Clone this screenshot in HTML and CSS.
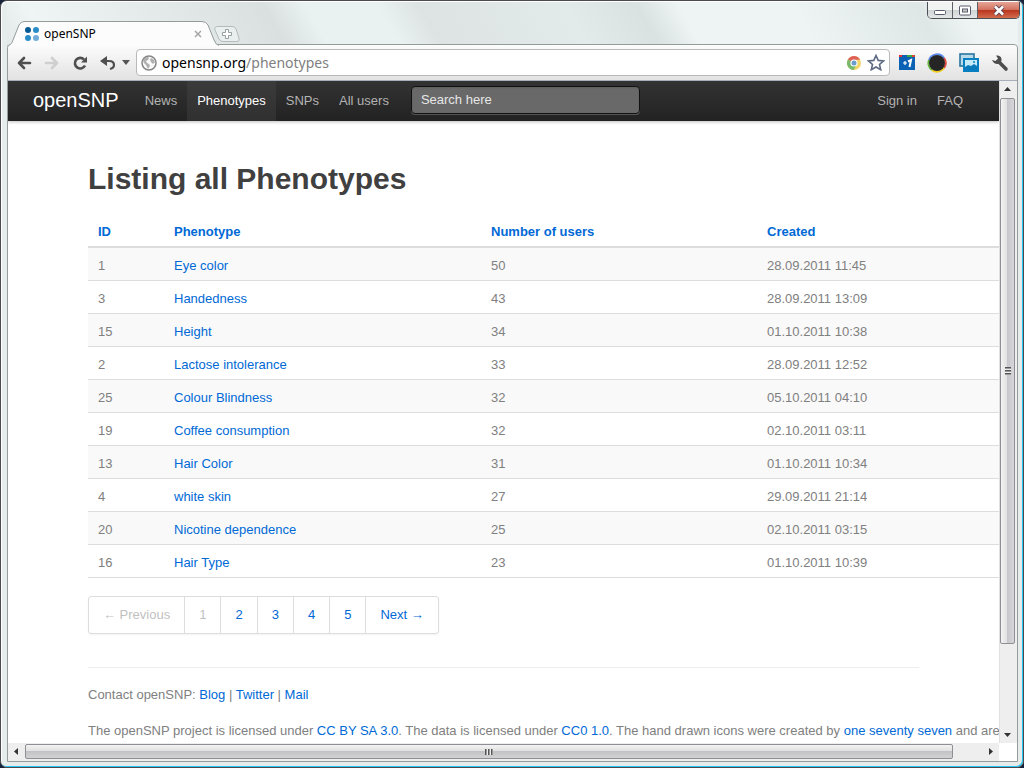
FILE: index.html
```
<!DOCTYPE html>
<html lang="en">
<head>
  <meta charset="UTF-8" />
  <title>openSNP</title>
  <link rel="stylesheet" href="styles.css">
</head>
<body>

  <div class="window">
    <header class="titlebar">
      <div class="tab">
        <svg class="tab-shape" width="212" height="25" viewBox="0 0 212 25">
          <path d="M0 25 C4 24 5 22 6 19 L12 4 Q14 .5 17 .5 H195 Q199 .5 201 4 L207 19 Q209 24 212 24.5" fill="#fcfcfc" stroke="#939c9b"/>
        </svg>
        <svg class="favicon" width="16" height="16" viewBox="0 0 16 16">
          <circle cx="4" cy="4" r="3" fill="#075a96"/>
          <circle cx="12" cy="4" r="3" fill="#2a8cc6"/>
          <circle cx="4" cy="12" r="3" fill="#2a8cc6"/>
          <circle cx="12" cy="12" r="3" fill="#72acd8"/>
        </svg>
        <span class="tab-title">openSNP</span>
        <button class="tab-close" aria-label="Close tab">
          <svg width="8" height="8" viewBox="0 0 8 8"><path d="M1 1L7 7M7 1L1 7" stroke="#a5a5a5" stroke-width="1.5"/></svg>
        </button>
      </div>
      <button class="new-tab" aria-label="New tab">
        <svg width="26" height="16" viewBox="0 0 26 16">
          <path d="M4 .5 H18 Q21 .5 22 3 L25 12 Q26 15.500 23 15.500 H9 Q6 15.500 5 13 L1 4 Q0 .5 4 .5Z" fill="#e9efee" stroke="#b2baba"/>
          <path d="M11.500 3.500h3v3h3v3h-3v3h-3v-3h-3v-3h3z" fill="#fff" stroke="#979f9f"/>
        </svg>
      </button>
      <div class="window-buttons">
        <button aria-label="Minimize"><svg width="14" height="11" viewBox="0 0 14 11"><rect x="1.500" y="5.500" width="11" height="4" rx="1" fill="#fff" stroke="#595b6b"/></svg></button>
        <button aria-label="Maximize"><svg width="14" height="11" viewBox="0 0 14 11"><rect x="1.500" y="1" width="11" height="9" rx="1" fill="#fff" stroke="#595b6b"/><rect x="4.500" y="4" width="5" height="3" fill="#ccc" stroke="#595b6b"/></svg></button>
        <button class="close" aria-label="Close"><svg width="14" height="11" viewBox="0 0 14 11"><path d="M3 1.500L11 9.500M11 1.500L3 9.500" stroke="#5b4754" stroke-width="4.500"/><path d="M3 1.500L11 9.500M11 1.500L3 9.500" stroke="#fff" stroke-width="2.500"/></svg></button>
      </div>
    </header>

    <div class="browser">
      <div class="toolbar">
        <button aria-label="Back"><svg width="16" height="14" viewBox="0 0 16 14"><path d="M14 7H3M8 2L3 7l5 5" fill="none" stroke="#4f4f4f" stroke-width="2.600" stroke-linecap="round" stroke-linejoin="round"/></svg></button>
        <button aria-label="Forward"><svg width="16" height="14" viewBox="0 0 16 14"><path d="M2 7H13M8 2l5 5-5 5" fill="none" stroke="#cfcfcf" stroke-width="2.600" stroke-linecap="round" stroke-linejoin="round"/></svg></button>
        <button aria-label="Reload"><svg width="16" height="16" viewBox="0 0 16 16"><path d="M12 4.500A5.300 5.300 0 1 0 13 10.500" fill="none" stroke="#4f4f4f" stroke-width="2.600"/><path d="M15 1.500v6H9z" fill="#4f4f4f"/></svg></button>
        <button class="undo" aria-label="Undo"><svg width="16" height="16" viewBox="0 0 16 16"><path d="M4 6H9Q14 6 14 10Q14 13 10 14" fill="none" stroke="#4f4f4f" stroke-width="2.200"/><path d="M7 1v10L0 6z" fill="#4f4f4f"/></svg></button>
        <button class="caret" aria-label="History"><svg width="8" height="5" viewBox="0 0 8 5"><path d="M0 0h8L4 5z" fill="#555"/></svg></button>
        <div class="omnibox">
          <svg width="16" height="16" viewBox="0 0 16 16">
            <circle cx="8" cy="8" r="7" fill="#fafafa" stroke="#858585" stroke-width="1.500"/>
            <path d="M2 6Q3 2.500 7 2L8 3 7 5 5 6 6 8 8 9 9 11 7 14Q6 12 5 10L3 8zM10 3Q13 4 14 7L12 9 10 7 9 5z" fill="#b0b0b0"/>
          </svg>
          <span class="url">opensnp.org<span>/phenotypes</span></span>
          <svg class="chrome-icon" width="16" height="16" viewBox="0 0 16 16">
            <circle cx="8" cy="8" r="7" fill="#f3d667"/>
            <path d="M8 8L1.900 4.500A7 7 0 0 1 14.100 4.500L8 5z" fill="#df6058"/>
            <path d="M1.900 4.500A7 7 0 0 0 7.500 15L11 9.500 8 8z" fill="#79b96b"/>
            <circle cx="8" cy="8" r="3.600" fill="#fff"/><circle cx="8" cy="8" r="2.500" fill="#6b9dcc"/>
          </svg>
          <svg width="18" height="17" viewBox="0 0 18 17"><path d="M9 1.500l2.200 4.900 5.300.5-4 3.600 1.200 5.200L9 13l-4.700 2.700 1.200-5.200-4-3.600 5.300-.5z" fill="#fff" stroke="#5f6b83" stroke-width="1.600"/></svg>
        </div>
        <div class="extensions">
          <svg width="16" height="15" viewBox="0 0 16 15">
            <rect width="16" height="15" fill="#0b62b4"/>
            <path d="M0 0h3v2H0z" fill="#d33"/><path d="M8 0h5v2H8z" fill="#39a845"/><path d="M13 0h3v2h-3z" fill="#d9452f"/>
            <path d="M4 8h4M6 6v4" stroke="#fff" stroke-width="1.200"/>
            <path d="M9 6.500L12 5l-1.500 7" fill="none" stroke="#fff" stroke-width="2"/>
          </svg>
          <svg width="20" height="20" viewBox="0 0 20 20">
            <path d="M2 7A8.500 8.500 0 0 1 17 5" fill="none" stroke="#5b8def" stroke-width="2"/>
            <path d="M17 5A8.500 8.500 0 0 1 17 15" fill="none" stroke="#e34b3e" stroke-width="2"/>
            <path d="M17 15A8.500 8.500 0 0 1 5 17" fill="none" stroke="#f2cd19" stroke-width="2"/>
            <path d="M5 17A8.500 8.500 0 0 1 2 7" fill="none" stroke="#64b53b" stroke-width="2"/>
            <circle cx="10" cy="10" r="8" fill="#252525"/>
          </svg>
          <svg width="20" height="20" viewBox="0 0 20 20">
            <rect x="1" y="1" width="14" height="12" fill="#b9dbe9" stroke="#29759f" stroke-width="1.600"/>
            <rect x="5" y="6" width="14" height="12" fill="#c5eafa" stroke="#087fc1" stroke-width="2"/>
            <path d="M6 14l3-2 3 1 3-2 3 2v4H6z" fill="#0879bb"/><circle cx="15" cy="9" r="1" fill="#087fc1"/>
          </svg>
          <svg width="18" height="18" viewBox="0 0 18 18">
            <path d="M8 8L15 15" stroke="#4d4d4d" stroke-width="3.600" stroke-linecap="round"/>
            <path d="M5 1.500Q10 1 10.500 5Q11 9 7 10Q3 10.500 1 6L4.500 7 7 4.500z" fill="#4d4d4d"/>
          </svg>
        </div>
      </div>

      <div class="viewport">
        <main class="page">
          <nav class="topbar">
            <a class="brand" href="#">openSNP</a>
            <ul class="nav">
              <li><a href="#">News</a></li>
              <li class="active"><a href="#">Phenotypes</a></li>
              <li><a href="#">SNPs</a></li>
              <li><a href="#">All users</a></li>
            </ul>
            <form><input type="text" placeholder="Search here" aria-label="Search here"></form>
            <ul class="nav secondary">
              <li><a href="#">Sign in</a></li>
              <li><a href="#">FAQ</a></li>
            </ul>
          </nav>

          <div class="content">
            <h1>Listing all Phenotypes</h1>
            <table>
              <colgroup><col class="col-id"><col class="col-name"><col class="col-users"><col></colgroup>
              <thead>
                <tr><th><a href="#">ID</a></th><th><a href="#">Phenotype</a></th><th><a href="#">Number of users</a></th><th><a href="#">Created</a></th></tr>
              </thead>
              <tbody>
                <tr><td>1</td><td><a href="#">Eye color</a></td><td>50</td><td>28.09.2011 11:45</td></tr>
                <tr><td>3</td><td><a href="#">Handedness</a></td><td>43</td><td>28.09.2011 13:09</td></tr>
                <tr><td>15</td><td><a href="#">Height</a></td><td>34</td><td>01.10.2011 10:38</td></tr>
                <tr><td>2</td><td><a href="#">Lactose intolerance</a></td><td>33</td><td>28.09.2011 12:52</td></tr>
                <tr><td>25</td><td><a href="#">Colour Blindness</a></td><td>32</td><td>05.10.2011 04:10</td></tr>
                <tr><td>19</td><td><a href="#">Coffee consumption</a></td><td>32</td><td>02.10.2011 03:11</td></tr>
                <tr><td>13</td><td><a href="#">Hair Color</a></td><td>31</td><td>01.10.2011 10:34</td></tr>
                <tr><td>4</td><td><a href="#">white skin</a></td><td>27</td><td>29.09.2011 21:14</td></tr>
                <tr><td>20</td><td><a href="#">Nicotine dependence</a></td><td>25</td><td>02.10.2011 03:15</td></tr>
                <tr><td>16</td><td><a href="#">Hair Type</a></td><td>23</td><td>01.10.2011 10:39</td></tr>
              </tbody>
            </table>

            <ul class="pagination">
              <li class="disabled">← Previous</li>
              <li class="disabled">1</li>
              <li><a href="#">2</a></li>
              <li><a href="#">3</a></li>
              <li><a href="#">4</a></li>
              <li><a href="#">5</a></li>
              <li><a href="#">Next →</a></li>
            </ul>

            <footer>
              <p>Contact openSNP: <a href="#">Blog</a> | <a href="#">Twitter</a> | <a href="#">Mail</a></p>
              <p>The openSNP project is licensed under <a href="#">CC BY SA 3.0</a>. The data is licensed under <a href="#">CC0 1.0</a>. The hand drawn icons were created by <a href="#">one seventy seven</a> and are</p>
            </footer>
          </div>
        </main>

        <div class="scroll-v">
          <svg width="17" height="17" viewBox="0 0 17 17"><path d="M4 10h7L7.500 6z" fill="#333"/></svg>
          <div class="track"><div class="thumb"><i class="grip"></i></div></div>
          <svg width="17" height="17" viewBox="0 0 17 17"><path d="M4 7h7L7.500 11z" fill="#333"/></svg>
        </div>
        <div class="scroll-h">
          <svg width="17" height="17" viewBox="0 0 17 17"><path d="M10 5v7L6 8.500z" fill="#333"/></svg>
          <div class="track"><div class="thumb"><i class="grip"></i></div></div>
          <svg width="17" height="17" viewBox="0 0 17 17"><path d="M7 5v7l4-3.500z" fill="#333"/></svg>
        </div>
      </div>
    </div>
  </div>

</body>
</html>
```
FILE: styles.css
```
* {
  box-sizing: border-box;
}

body {
  margin: 0;
  background: #17233a;
  font-family: "Liberation Sans", Arial, sans-serif;
  font-size: 13px;
  line-height: 18px;
  color: #808080;
}

a {
  color: #0069d6;
  text-decoration: none;
}

button {
  display: flex;
  align-items: center;
  justify-content: center;
  padding: 0;
  border: none;
  background: none;
}

svg {
  display: block;
  flex: none;
}

ul {
  list-style: none;
  margin: 0;
  padding: 0;
}

/* window frame */
.window {
  display: flex;
  flex-direction: column;
  height: 100vh;
  padding: 0 5px 5px 6px;
  border: 1px solid #4a4a50;
  border-radius: 7px;
  box-shadow: inset -1px -1px 0 #22c8f2, inset 1px 1px 0 #fff;
  background: #e6eceb;
}

.titlebar {
  display: flex;
  align-items: flex-end;
  flex: none;
  height: 43px;
  margin-top: 1px;
  margin-bottom: -1px;
  background: linear-gradient(60deg, #e3e9e8 0, #eff4f4 4%, #e3e9e8 17%, #d9e0df 27%, #eaf2f1 31%, #eaf2f1 38%, #dce3e2 42%, #e3ebea 56%, #dae2e1 63%, #edf4f3 67%, #edf4f3 78%, #dfe6e6 90%, #eef4f4 94%);
}

.tab {
  position: relative;
  z-index: 1;
  display: flex;
  align-items: center;
  width: 212px;
  height: 25px;
  padding: 0 17px 0 17px;
  margin-bottom: -1px;
}

.tab-shape {
  position: absolute;
  left: 0;
  top: 0;
}

.favicon,
.tab-title,
.tab-close {
  position: relative;
}

.tab-title {
  flex: 1;
  padding-left: 4px;
  font-family: "Noto Sans", sans-serif;
  font-size: 12px;
  color: #000;
}

.new-tab {
  align-self: flex-end;
  margin: 0 0 3px -5px;
}

.window-buttons {
  display: flex;
  align-self: flex-start;
  margin-left: auto;
  margin-right: -2px;
  border: 1px solid #4d4f57;
  border-top: none;
  border-radius: 0 0 5px 5px;
  overflow: hidden;
}

.window-buttons button {
  width: 25px;
  height: 16px;
  border-right: 1px solid #5e6068;
  background: linear-gradient(#f1f3f3 50%, #ced3d3 50%, #e4e7e7);
}

.window-buttons .close {
  width: 41px;
  border: none;
  background: linear-gradient(#e6a596, #d3705c 50%, #b8341c 50%, #d36b4e);
}

.browser {
  display: flex;
  flex-direction: column;
  flex: 1;
  min-height: 0;
  border: 1px solid #939c9b;
  border-radius: 4px 4px 0 0;
}

.toolbar {
  display: flex;
  align-items: center;
  flex: none;
  height: 36px;
  padding: 0 8px 0 7px;
  border-bottom: 1px solid #a9aeb8;
  border-radius: 4px 4px 0 0;
  background: linear-gradient(#fcfcfc, #e2e2e2);
}

.toolbar button {
  width: 18px;
  margin-right: 10px;
}

.toolbar .undo {
  margin-right: 0;
}

.toolbar .caret {
  margin-right: 1px;
}

.omnibox {
  display: flex;
  align-items: center;
  flex: 1;
  height: 27px;
  padding: 0 4px;
  border: 1px solid #b9b9b9;
  border-radius: 4px;
  background: #fff;
}

.url {
  flex: 1;
  padding-left: 5px;
  font-family: "Noto Sans", sans-serif;
  font-size: 14px;
  color: #000;
}

.url span {
  color: #808080;
}

.chrome-icon {
  margin-right: 5px;
}

.extensions {
  display: flex;
  align-items: center;
  gap: 12px;
  margin-left: 9px;
}

/* page area with its scrollbars */
.viewport {
  display: grid;
  grid-template-columns: minmax(0, 1fr) 18px;
  grid-template-rows: minmax(0, 1fr) 18px;
  flex: 1;
  min-height: 0;
  background: #fff;
}

.page {
  overflow: hidden;
}

.topbar {
  display: flex;
  align-items: flex-start;
  height: 40px;
  padding: 0 26px 0 25px;
  background: linear-gradient(#333, #222);
  box-shadow: 0 1px 3px rgba(0, 0, 0, 0.25);
}

.brand {
  padding: 9px 16px 11px 0;
  font-size: 20px;
  line-height: 20px;
  color: #fff;
}

.nav {
  display: flex;
}

.nav a {
  display: block;
  padding: 10px 10px 11px;
  line-height: 19px;
  color: #b3b3b3;
}

.nav .active a {
  background: linear-gradient(#3b3b3b, #303030);
  color: #fff;
}

.secondary {
  margin-left: auto;
}

.topbar form {
  margin: 5px 0 0 12px;
}

.topbar input {
  display: block;
  width: 229px;
  height: 28px;
  padding: 3px 9px 5px;
  border: 1px solid #111;
  border-radius: 4px;
  background: #696969;
  box-shadow: inset 0 1px 2px rgba(0, 0, 0, 0.1), 0 1px 0 #555;
  font-family: inherit;
  font-size: 13px;
  color: #fff;
}

.topbar input::placeholder {
  color: #e6e6e6;
}

.content {
  padding: 40px 80px 0;
}

h1 {
  margin: 0;
  font-size: 30px;
  line-height: 36px;
  color: #404040;
}

table {
  width: 100%;
  min-width: 940px;
  margin: 18px 0;
  table-layout: fixed;
  border-collapse: collapse;
}

.col-id {
  width: 76px;
}

.col-name {
  width: 317px;
}

.col-users {
  width: 276px;
}

th,
td {
  padding: 9px 10px 5px;
  text-align: left;
  border-bottom: 1px solid #ddd;
}

th {
  padding-top: 8px;
  padding-bottom: 5px;
  border-bottom-width: 2px;
}

tbody tr:nth-child(odd) {
  background: #f9f9f9;
}

.pagination {
  display: flex;
  width: max-content;
  border: 1px solid #ddd;
  border-radius: 3px;
  box-shadow: 0 1px 2px rgba(0, 0, 0, 0.05);
}

.pagination li {
  padding: 0 14px;
  line-height: 36px;
  border-right: 1px solid #ddd;
}

.pagination li:last-child {
  border-right: none;
}

.pagination .disabled {
  color: #bfbfbf;
}

footer {
  margin-top: 33px;
  padding-top: 18px;
  border-top: 1px solid #eee;
  white-space: nowrap;
}

footer p {
  margin: 0 0 18px;
}

/* scrollbars */
.scroll-v,
.scroll-h {
  display: flex;
  background: #eeeeef;
}

.scroll-v {
  flex-direction: column;
  border-left: 1px solid #e0e0e0;
}

.track {
  flex: 1;
}

.thumb {
  display: flex;
  align-items: center;
  justify-content: center;
  border: 1px solid #8e8f94;
  border-radius: 2px;
}

.scroll-v .thumb {
  width: 15px;
  height: 87%;
  background: linear-gradient(90deg, #f3f3f3, #dfdfe1 50%, #c7c7cc 50%, #d7d7da);
}

.scroll-h .thumb {
  width: 97%;
  height: 15px;
  margin-top: 1px;
  background: linear-gradient(#f3f3f3, #dfdfe1 50%, #c3c3c6 50%, #d2d2d5);
}

.grip {
  width: 8px;
  height: 8px;
}

.scroll-v .grip {
  width: 6px;
  background: repeating-linear-gradient(#555 0 1px, #999 1px 2px, #eee 2px 3px);
}

.scroll-h .grip {
  height: 6px;
  background: repeating-linear-gradient(90deg, #555 0 1px, #999 1px 2px, #eee 2px 3px);
}
```
